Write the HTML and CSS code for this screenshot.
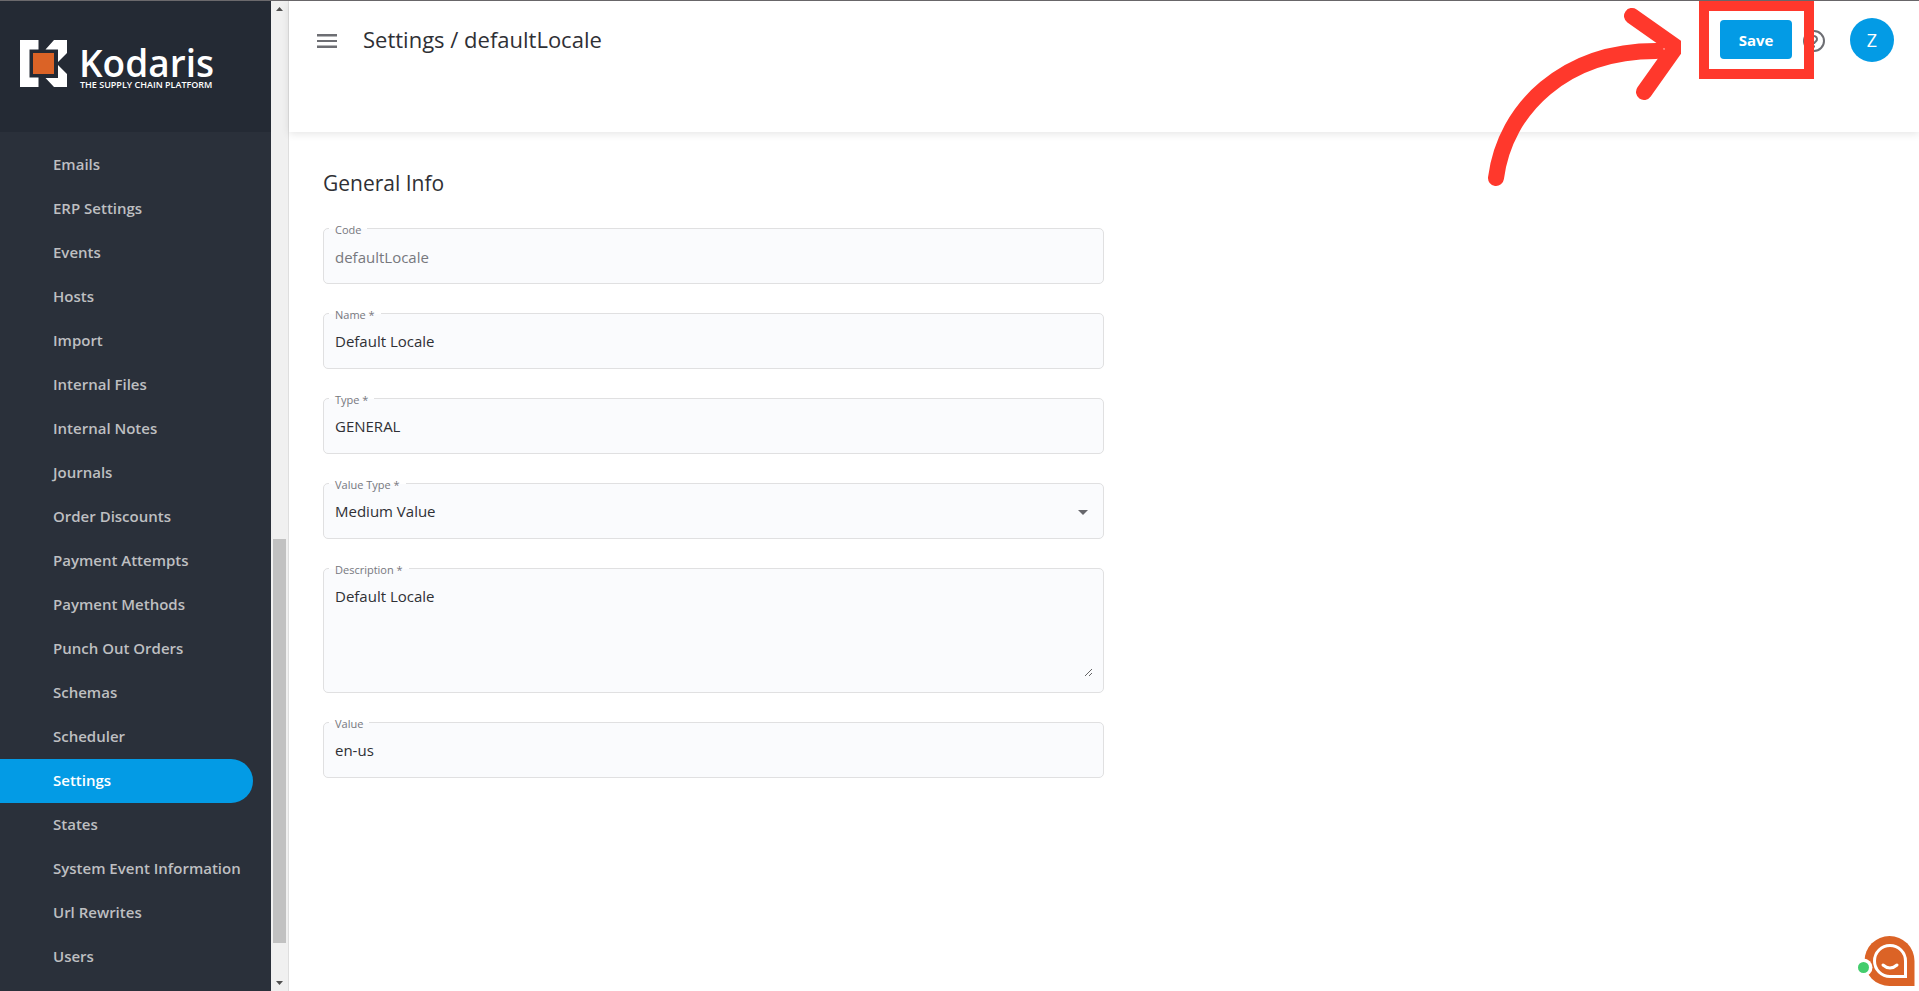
FILE: index.html
```html
<!DOCTYPE html>
<html lang="en">
<head>
<meta charset="utf-8">
<title>Settings / defaultLocale</title>
<link rel="stylesheet" href="styles.css">
</head>
<body>
<div class="app">
  <aside class="sidebar">
    <div class="brand">
      <svg class="brand-mark" viewBox="0 0 47 47" aria-hidden="true">
        <path fill="#fff" d="M0 0h18.500v9.500H9.500v28h9V47H0zM25.500 9.500 34 0h13v13l-9 9V9.500zM38 25l9 9v13H34l-8.500-9H38z"/>
        <path fill="#db6326" d="M13 13h21v21H13z"/>
      </svg>
      <div class="brand-text">
        <span class="brand-name">Kodaris</span>
        <span class="brand-tag">THE SUPPLY CHAIN PLATFORM</span>
      </div>
    </div>
    <nav class="nav">
      <a href="#">Emails</a>
      <a href="#">ERP Settings</a>
      <a href="#">Events</a>
      <a href="#">Hosts</a>
      <a href="#">Import</a>
      <a href="#">Internal Files</a>
      <a href="#">Internal Notes</a>
      <a href="#">Journals</a>
      <a href="#">Order Discounts</a>
      <a href="#">Payment Attempts</a>
      <a href="#">Payment Methods</a>
      <a href="#">Punch Out Orders</a>
      <a href="#">Schemas</a>
      <a href="#">Scheduler</a>
      <a href="#" class="active" aria-current="page">Settings</a>
      <a href="#">States</a>
      <a href="#">System Event Information</a>
      <a href="#">Url Rewrites</a>
      <a href="#">Users</a>
    </nav>
  </aside>
  <div class="scrollbar" aria-hidden="true">
    <svg class="scroll-arrow" viewBox="0 0 17 17"><path fill="#505050" d="M5 10l3.500-4L12 10z"/></svg>
    <div class="scroll-track"><div class="scroll-thumb"></div></div>
    <svg class="scroll-arrow" viewBox="0 0 17 17"><path fill="#505050" d="M5 7l3.500 4L12 7z"/></svg>
  </div>
  <main class="main">
    <header class="topbar">
      <button class="icon-button" type="button" aria-label="Menu">
        <svg viewBox="0 0 20 14" width="20" height="14"><path fill="#6d6e73" d="M0 0h20v2.500H0zM0 6h20v2H0zM0 11.500h20V14H0z"/></svg>
      </button>
      <h1 class="title">Settings / defaultLocale</h1>
      <div class="save-wrap">
        <button class="save" type="button">Save</button>
        <svg class="arrow" viewBox="0 0 200 192" aria-hidden="true">
          <path fill="none" stroke="#ff382c" stroke-width="16" stroke-linecap="round" stroke-linejoin="round" d="M15 178C24 108 84 51 175 51M151 16l44 31-32 45"/>
        </svg>
      </div>
      <button class="icon-button help" type="button" aria-label="Help">
        <svg viewBox="0 0 22 22" width="22" height="22" fill="none" stroke="#6d6e73" stroke-width="2"><circle cx="11" cy="11" r="10"/><path d="M8 9a3 3 0 1 1 4.800 2.400C11.500 12.300 11 12.800 11 14M11 15.500v2"/></svg>
      </button>
      <button class="avatar" type="button">Z</button>
    </header>
    <form class="form">
      <h2 class="section-title">General Info</h2>
      <div class="field">
        <label for="code">Code</label>
        <input id="code" type="text" value="defaultLocale" disabled>
      </div>
      <div class="field">
        <label for="name">Name *</label>
        <input id="name" type="text" value="Default Locale">
      </div>
      <div class="field">
        <label for="type">Type *</label>
        <input id="type" type="text" value="GENERAL">
      </div>
      <div class="field">
        <label for="value-type">Value Type *</label>
        <select id="value-type"><option>Medium Value</option></select>
        <svg class="caret" viewBox="0 0 10 5" aria-hidden="true"><path fill="#66676c" d="M0 0h10L5 5z"/></svg>
      </div>
      <div class="field">
        <label for="description">Description *</label>
        <textarea id="description">Default Locale</textarea>
      </div>
      <div class="field">
        <label for="value">Value</label>
        <input id="value" type="text" value="en-us">
      </div>
    </form>
  </main>
</div>
<button class="chat" type="button" aria-label="Chat">
  <svg viewBox="0 0 60 50" width="60" height="50">
    <path fill="#db6326" d="M34.500 0A25 25 0 0 1 59.500 25v25h-25a25 25 0 0 1 0-50z"/>
    <path fill="none" stroke="#fff" stroke-width="3" d="M35 9.500a15.500 15.500 0 0 1 15.500 15.500v15.500H35a15.500 15.500 0 0 1 0-31z"/>
    <path fill="none" stroke="#fff" stroke-width="3" stroke-linecap="round" d="M28 29q7 6 14 0"/>
    <circle cx="8.500" cy="31.500" r="9" fill="#fff"/>
    <circle cx="8.500" cy="31.500" r="5.500" fill="#43cd6d"/>
  </svg>
</button>
</body>
</html>
```
FILE: styles.css
```css
* { box-sizing: border-box; }

body {
  margin: 0;
  background: #fff;
  color: #2f3035;
  font-family: "Open Sans", "Noto Sans", sans-serif;
  font-size: 15px;
}

button, input, select, textarea { font: inherit; color: inherit; }

.app {
  display: flex;
  min-height: 100vh;
  border-top: 1px solid #6b696c;
}

.sidebar {
  flex: 0 0 271px;
  background: #2a303a;
}

.brand {
  display: flex;
  align-items: flex-start;
  gap: 12px;
  height: 131px;
  padding: 39px 20px 0;
  background: #242a34;
  color: #fff;
}

.brand-mark { width: 47px; height: 47px; }

.brand-text { display: flex; flex-direction: column; }

.brand-name {
  font-size: 37px;
  font-weight: 600;
  line-height: 46px;
}

.brand-tag {
  margin-top: -6px;
  padding-left: 1px;
  font-size: 9px;
  font-weight: 600;
  line-height: 10px;
  white-space: nowrap;
}

.nav {
  display: flex;
  flex-direction: column;
  padding: 11px 18px 11px 0;
}

.nav a {
  height: 44px;
  padding-left: 53px;
  border-radius: 0 22px 22px 0;
  color: #bebfc1;
  font-weight: 600;
  line-height: 43px;
  text-decoration: none;
  white-space: nowrap;
}

.nav .active { background: #039be5; color: #fff; }

.scrollbar {
  display: flex;
  flex: 0 0 18px;
  flex-direction: column;
  border-right: 1px solid #dedede;
  background: #f0f0f0;
}

.scroll-arrow { width: 17px; height: 17px; }

.scroll-track {
  display: flex;
  flex: 1;
  flex-direction: column;
  padding: 0 2px;
}

.scroll-track::before { content: ""; flex: 521; }
.scroll-track::after { content: ""; flex: 31; }

.scroll-thumb {
  flex: 404;
  width: 13px;
  background: #c1c1c1;
}

.main { flex: 1; min-width: 0; }

.topbar {
  display: flex;
  align-items: flex-start;
  height: 131px;
  padding: 17px 25px 0 28px;
  box-shadow: 0 2px 8px rgba(0, 0, 0, 0.1);
}

.icon-button {
  display: flex;
  align-items: center;
  height: 46px;
  padding: 0;
  border: 0;
  background: none;
}

.title {
  flex: 1;
  margin: 0 0 0 26px;
  font-size: 22px;
  font-weight: 400;
  line-height: 42px;
}

.save-wrap {
  position: relative;
  margin: -17px 0 0;
  padding: 9px 12px 10px 11px;
  border: 10px solid #ff382c;
  z-index: 1;
}

.save {
  display: block;
  width: 72px;
  height: 39px;
  padding: 0;
  border: 0;
  border-radius: 4px;
  background: #039be5;
  color: #fff;
  font-weight: 700;
}

.arrow {
  position: absolute;
  top: -11px;
  right: 123px;
  width: 200px;
  height: 192px;
}

.help { margin-left: -11px; }

.avatar {
  width: 44px;
  height: 44px;
  margin-left: 25px;
  padding: 0;
  border: 0;
  border-radius: 50%;
  background: #039be5;
  color: #fff;
  font-size: 18px;
}

.form {
  display: flex;
  flex-direction: column;
  gap: 29px;
  padding: 36px 34px;
}

.section-title {
  margin: 0;
  font-size: 21px;
  font-weight: 400;
  line-height: 31px;
}

.field {
  position: relative;
  width: 50%;
  border: 1px solid #e0e0e1;
  border-radius: 5px;
  background: #fafbfd;
}

.field label {
  position: absolute;
  top: -7px;
  left: 5px;
  padding: 0 6px;
  background: linear-gradient(#fff 7px, #fafbfd 7px);
  color: #77787d;
  font-size: 11px;
  line-height: 16px;
}

.field input, .field select {
  display: block;
  width: 100%;
  height: 54px;
  padding: 0 11px;
  border: 0;
  outline: 0;
  background: none;
  appearance: none;
}

.field input:disabled { padding-top: 2px; color: #77787d; }

.field textarea {
  display: block;
  width: calc(100% - 21px);
  height: 92px;
  margin: 16px 10px 15px 11px;
  padding: 0;
  border: 0;
  outline: 0;
  background: none;
  line-height: 22px;
}

.caret {
  position: absolute;
  top: 26px;
  right: 15px;
  width: 10px;
  height: 5px;
}

.chat {
  position: fixed;
  right: 4px;
  bottom: 5px;
  padding: 0;
  border: 0;
  background: none;
}

.chat svg { display: block; }
```
